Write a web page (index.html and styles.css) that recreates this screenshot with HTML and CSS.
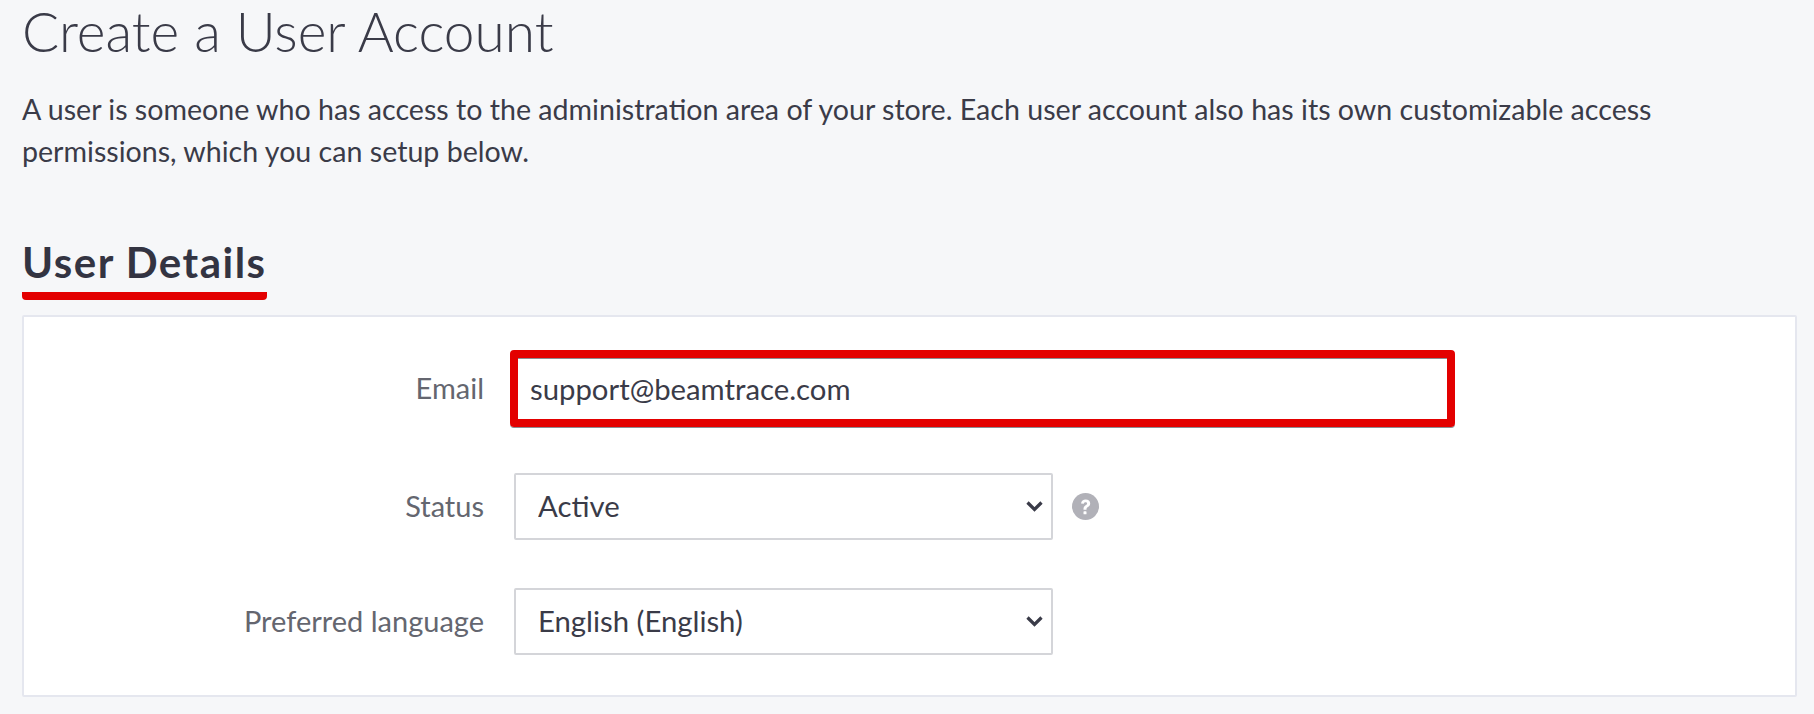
FILE: index.html
```html
<!DOCTYPE html>
<html lang="en">
<head>
  <meta charset="UTF-8">
  <meta name="viewport" content="width=device-width, initial-scale=1.0">
  <title>Create a User Account</title>
  <link rel="stylesheet" href="styles.css">
</head>
<body>
  <div class="container">
    <h1>Create a User Account</h1>
    <p class="intro">A user is someone who has access to the administration area of your store. Each user account also has its own customizable access<br>permissions, which you can setup below.</p>

    <h2><span class="marked">User Details</span></h2>

    <form class="panel">
      <div class="form-row row-email">
        <label for="email">Email</label>
        <div class="highlight">
          <input id="email" type="text" value="support@beamtrace.com">
        </div>
      </div>

      <div class="form-row row-status">
        <label for="status">Status</label>
        <select id="status">
          <option>Active</option>
        </select>
        <svg class="help" viewBox="0 0 27 27" aria-hidden="true">
          <circle cx="13.5" cy="13.5" r="13.5" fill="#b1b1b8"/>
          <path d="M9 10.6c.3-2.6 2.2-4 4.7-4 2.600 0 4.500 1.500 4.500 3.800 0 1.900-1.100 2.800-2.300 3.600-1 .7-1.400 1.200-1.400 2.300v.4h-3v-.6c0-1.900.8-2.900 2.100-3.800 1-.7 1.500-1.100 1.500-1.800 0-.8-.7-1.300-1.600-1.300-1 0-1.600.6-1.700 1.600z" fill="#fff"/>
          <rect x="11.500" y="18.300" width="3" height="3" rx=".6" fill="#fff"/>
        </svg>
      </div>

      <div class="form-row row-language">
        <label for="language">Preferred language</label>
        <select id="language">
          <option>English (English)</option>
        </select>
      </div>
    </form>
  </div>
</body>
</html>
```

FILE: styles.css
```css
body {
  font-family: Lato, "Noto Sans", sans-serif;
  background-color: #f6f7f9;
  color: #3a3b48;
  margin: 0;
  padding: 0;
}

.container {
  padding: 0 17px 0 22px;
}

h1 {
  font-size: 55px;
  font-weight: 300;
  line-height: 62px;
  color: #3a3b48;
  margin: 0;
}

.intro {
  font-size: 28.6px;
  line-height: 42px;
  margin: 26px 0 0;
}

h2 {
  font-size: 42px;
  font-weight: 700;
  letter-spacing: 1.5px;
  line-height: 50px;
  color: #333442;
  margin: 65px 0 0;
}

.marked {
  display: inline-block;
  padding-bottom: 5px;
  border-bottom: 8px solid #e30000;
  border-radius: 4px;
}

.panel {
  background-color: #fff;
  border: 2px solid #e5e7ef;
  border-radius: 2px;
  margin-top: 15px;
  height: 382px;
  box-sizing: border-box;
}

.form-row {
  display: flex;
  align-items: center;
  height: 67px;
}

.row-email {
  margin-top: 33px;
  height: 77px;
}

.row-status {
  margin-top: 46px;
}

.row-language {
  margin-top: 48px;
}

label {
  width: 460px;
  margin-right: 30px;
  margin-top: -2px;
  text-align: right;
  font-size: 29px;
  color: #64666f;
}

.highlight {
  box-sizing: border-box;
  width: 945px;
  height: 77px;
  margin-left: -4px;
  border: 8px solid #e30000;
  border-radius: 4px;
  box-shadow: 0 1px 0 #8b8b92;
}

input {
  display: block;
  box-sizing: border-box;
  width: 100%;
  height: 100%;
  border: 0;
  padding: 0 12px;
  outline: none;
  font: inherit;
  font-size: 29.3px;
  color: #3a3b48;
  background: #fff;
  box-shadow: inset 0 1px 0 #8b8b92;
}

select {
  appearance: none;
  box-sizing: border-box;
  width: 539px;
  height: 67px;
  border: 2px solid #d4d5d9;
  border-radius: 2px;
  padding: 0 22px 2px;
  font: inherit;
  font-size: 29.3px;
  color: #3a3b48;
  background: #fff url("data:image/svg+xml,%3Csvg xmlns='http://www.w3.org/2000/svg' viewBox='0 0 17 11'%3E%3Cpath d='M1.500 1.500l7 7 7-7' fill='none' stroke='%233a3b48' stroke-width='3.200'/%3E%3C/svg%3E") no-repeat right 8px center / 17px 11px;
}

.help {
  width: 27px;
  height: 27px;
  margin-left: 19px;
}
```
